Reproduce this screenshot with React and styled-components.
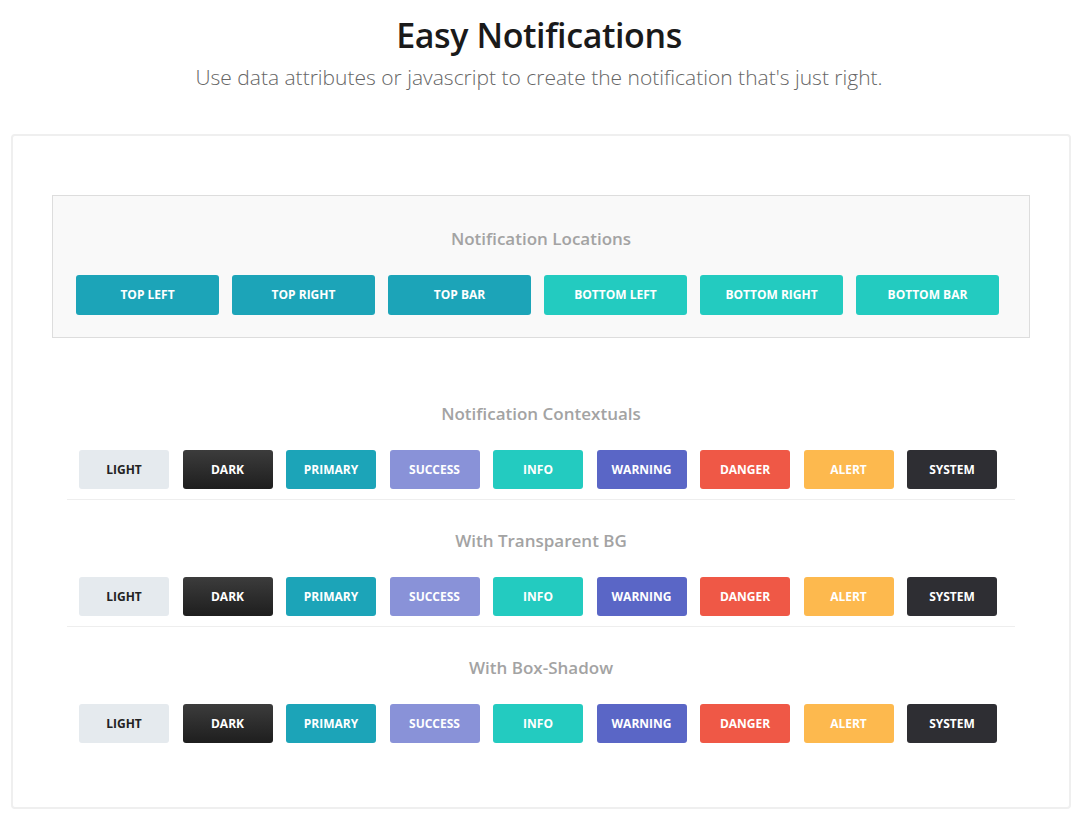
import styled, { createGlobalStyle } from "styled-components";

const GlobalStyle = createGlobalStyle`
  body {
    margin: 0;
    background: #fff;
    font-family: "Open Sans", "Liberation Sans", sans-serif;
  }
`;

const locations = [
  { label: "Top Left", tone: "#1ca4b8" },
  { label: "Top Right", tone: "#1ca4b8" },
  { label: "Top Bar", tone: "#1ca4b8" },
  { label: "Bottom Left", tone: "#23cbc0" },
  { label: "Bottom Right", tone: "#23cbc0" },
  { label: "Bottom Bar", tone: "#23cbc0" },
];

const contextuals = [
  { label: "Light", bg: "#e5eaee", color: "#222" },
  { label: "Dark", bg: "linear-gradient(to bottom, #3c3c3c, #1e1e1e)", color: "#fff" },
  { label: "Primary", bg: "#1ca4b8", color: "#fff" },
  { label: "Success", bg: "#8992d8", color: "#fff" },
  { label: "Info", bg: "#23cbc0", color: "#fff" },
  { label: "Warning", bg: "#5a66c6", color: "#fff" },
  { label: "Danger", bg: "#ef5846", color: "#fff" },
  { label: "Alert", bg: "#fdb94e", color: "#fff" },
  { label: "System", bg: "#2e2e33", color: "#fff" },
];

const sections = ["Notification Contextuals", "With Transparent BG", "With Box-Shadow"];

function App() {
  return (
    <>
      <GlobalStyle />
      <Header>
        <Title>Easy Notifications</Title>
        <Subtitle>
          Use data attributes or javascript to create the notification that's just right.
        </Subtitle>
      </Header>
      <Card>
        <Panel>
          <SectionTitle>Notification Locations</SectionTitle>
          <Row $gap={13} $shift={7}>
            {locations.map((l) => (
              <LocationButton key={l.label} $tone={l.tone}>
                {l.label}
              </LocationButton>
            ))}
          </Row>
        </Panel>
        <Sections>
          {sections.map((s, i) => (
            <Section key={s} $last={i === sections.length - 1}>
              <SectionTitle>{s}</SectionTitle>
              <Row $gap={13.5} $shift={6}>
                {contextuals.map((c) => (
                  <ContextButton key={c.label} $bg={c.bg} $color={c.color}>
                    {c.label}
                  </ContextButton>
                ))}
              </Row>
            </Section>
          ))}
        </Sections>
      </Card>
    </>
  );
}

const Header = styled.header`
  text-align: center;
  padding-top: 12px;
`;

const Title = styled.h1`
  margin: 0;
  font-size: 34px;
  line-height: 46px;
  font-weight: 600;
  color: #1a1a1a;
  letter-spacing: -0.4px;
`;

const Subtitle = styled.p`
  margin: 4px 0 0;
  font-size: 21px;
  line-height: 30px;
  font-weight: 300;
  color: #666;
`;

const Card = styled.main`
  margin: 42px 7px 0 11px;
  border: 2px solid #efefef;
  border-radius: 4px;
  padding: 59px 39px 64px;
`;

const Panel = styled.section`
  background: #f9f9f9;
  border: 1px solid #dddddd;
  padding: 31px 0 22px;
`;

const SectionTitle = styled.h3`
  margin: 0 0 24px;
  text-align: center;
  font-size: 17px;
  line-height: 24px;
  font-weight: 600;
  color: #a3a3a3;
`;

const Row = styled.div`
  display: flex;
  justify-content: center;
  gap: ${(p) => p.$gap}px;
  padding-right: ${(p) => p.$shift}px;
`;

const BaseButton = styled.button`
  border: none;
  border-radius: 3px;
  font-family: "Open Sans", "Liberation Sans", sans-serif;
  font-size: 12px;
  font-weight: 700;
  text-transform: uppercase;
  cursor: pointer;
  padding: 0;
`;

const LocationButton = styled(BaseButton)`
  width: 143px;
  height: 40px;
  padding-bottom: 1px;
  background: ${(p) => p.$tone};
  color: #fff;
`;

const ContextButton = styled(BaseButton)`
  width: 90px;
  height: 39px;
  padding-bottom: 1px;
  background: ${(p) => p.$bg};
  color: ${(p) => p.$color};
`;

const Sections = styled.div`
  margin: 35px 15px 0;
`;

const Section = styled.div`
  padding: 29px 0 ${(p) => (p.$last ? 0 : 10)}px;
  border-bottom: ${(p) => (p.$last ? "none" : "1px solid #eeeeee")};
`;

export default App;
